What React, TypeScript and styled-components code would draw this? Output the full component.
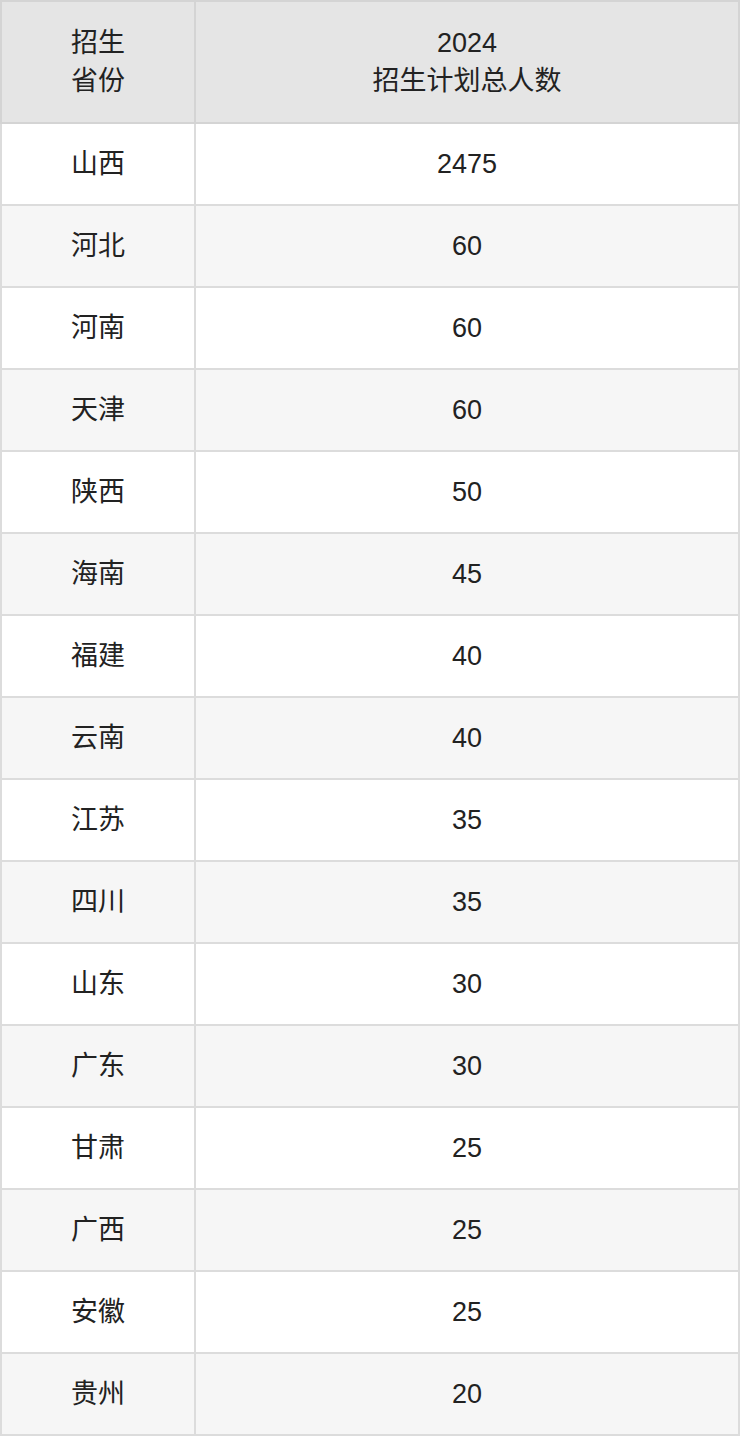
import React from "react";
import styled, { createGlobalStyle } from "styled-components";

type Row = {
  province: string;
  total: string;
};

const rows: Row[] = [
  { province: "山西", total: "2475" },
  { province: "河北", total: "60" },
  { province: "河南", total: "60" },
  { province: "天津", total: "60" },
  { province: "陕西", total: "50" },
  { province: "海南", total: "45" },
  { province: "福建", total: "40" },
  { province: "云南", total: "40" },
  { province: "江苏", total: "35" },
  { province: "四川", total: "35" },
  { province: "山东", total: "30" },
  { province: "广东", total: "30" },
  { province: "甘肃", total: "25" },
  { province: "广西", total: "25" },
  { province: "安徽", total: "25" },
  { province: "贵州", total: "20" },
];

const GlobalStyle = createGlobalStyle`
  html, body {
    margin: 0;
    padding: 0;
    background: #ffffff;
  }
  body {
    font-family: "Liberation Sans", "Noto Sans CJK SC", sans-serif;
    color: #222222;
  }
`;

const Table = styled.table`
  width: 740px;
  border-collapse: collapse;
  table-layout: fixed;
  font-size: 27px;
`;

const FirstCol = styled.col`
  width: 194px;
`;

const HeadCell = styled.th`
  height: 120px;
  padding: 0;
  border: 2px solid #d4d4d4;
  background: #e5e5e5;
  font-weight: normal;
  line-height: 38px;
  text-align: center;
  vertical-align: middle;
`;

const BodyRow = styled.tr<{ $striped: boolean }>`
  background: ${(p) => (p.$striped ? "#f6f6f6" : "#ffffff")};
`;

const Cell = styled.td`
  height: 80px;
  padding: 0;
  border: 2px solid #dcdcdc;
  line-height: 36px;
  text-align: center;
  vertical-align: middle;
`;

const App = () => {
  return (
    <>
      <GlobalStyle />
      <Table>
        <colgroup>
          <FirstCol />
          <col />
        </colgroup>
        <thead>
          <tr>
            <HeadCell>
              招生
              <br />
              省份
            </HeadCell>
            <HeadCell>
              2024
              <br />
              招生计划总人数
            </HeadCell>
          </tr>
        </thead>
        <tbody>
          {rows.map((row, i) => (
            <BodyRow key={row.province} $striped={i % 2 === 1}>
              <Cell>{row.province}</Cell>
              <Cell>{row.total}</Cell>
            </BodyRow>
          ))}
        </tbody>
      </Table>
    </>
  );
};

export default App;
